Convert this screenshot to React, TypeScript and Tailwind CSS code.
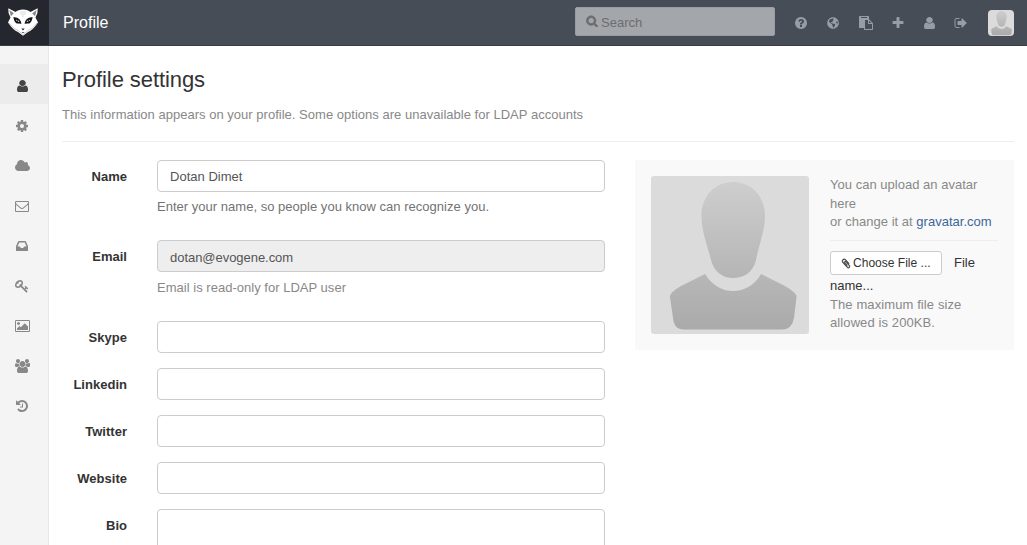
import type { ReactNode } from "react";
import { FaGlobeAmericas } from "react-icons/fa";

const PATHS = {
  user: "M1536 1399q0 109-62.5 187t-150.5 78h-854q-88 0-150.5-78t-62.5-187q0-85 8.5-160.5t31.5-152 58.5-131 94-89 134.5-34.5q131 128 313 128t313-128q76 0 134.5 34.5t94 89 58.5 131 31.5 152 8.5 160.5zm-256-887q0 159-112.5 271.5t-271.5 112.5-271.5-112.5-112.5-271.5 112.5-271.5 271.5-112.5 271.5 112.5 112.5 271.5z",
  cog: "M1152 896q0-106-75-181t-181-75-181 75-75 181 75 181 181 75 181-75 75-181zm512-109v222q0 12-8 23t-20 13l-185 28q-19 54-39 91 35 50 107 138 10 12 10 25t-9 23q-27 37-99 108t-94 71q-12 0-26-9l-138-108q-44 23-91 38-16 136-29 186-7 28-36 28h-222q-14 0-24.5-8.5t-11.5-21.5l-28-184q-49-16-90-37l-141 107q-10 9-25 9-14 0-25-11-126-114-165-168-7-10-7-23 0-12 8-23 15-21 51-66.5t54-70.5q-27-50-41-99l-183-27q-13-2-21-12.5t-8-23.5v-222q0-12 8-23t19-13l186-28q14-46 39-92-40-57-107-138-10-12-10-24 0-10 9-23 26-36 98.5-107.5t94.5-71.5q13 0 26 10l138 107q44-23 91-38 16-136 29-186 7-28 36-28h222q14 0 24.5 8.5t11.5 21.5l28 184q49 16 90 37l142-107q9-9 24-9 13 0 25 10 129 119 165 170 7 8 7 22 0 12-8 23-15 21-51 66.5t-54 70.5q26 50 41 98l183 28q13 2 21 12.5t8 23.5z",
  cloud: "M1984 1152q0 159-112.5 271.5t-271.5 112.5h-1088q-185 0-316.5-131.5t-131.5-316.5q0-132 71-241.5t187-163.5q-2-28-2-43 0-212 150-362t362-150q158 0 286.5 88t187.5 230q70-62 166-62 106 0 181 75t75 181q0 75-41 138 129 30 213 134.5t84 239.5z",
  mail: "M1664 1504v-768q-32 36-69 66-268 206-426 338-51 43-83 67t-86.5 48.5-102.5 24.5h-2q-48 0-102.5-24.5t-86.5-48.5-83-67q-158-132-426-338-37-30-69-66v768q0 13 9.5 22.5t22.5 9.5h1472q13 0 22.5-9.5t9.5-22.5zm0-1051v-24.5l-.5-13-3-12.5-5.5-9-9-7.5-14-2.5h-1472q-13 0-22.5 9.5t-9.5 22.5q0 168 147 284 193 152 401 317 6 5 35 29.5t46 37.5 44.5 31.5 50.5 27.5 43 9h2q20 0 43-9t50.5-27.5 44.5-31.5 46-37.5 35-29.5q208-165 401-317 54-43 100.5-115.5t46.5-131.5zm128-37v1088q0 66-47 113t-113 47h-1472q-66 0-113-47t-47-113v-1088q0-66 47-113t113-47h1472q66 0 113 47t47 113z",
  inbox: "M1151 960h316q-1-3-2.5-8t-2.5-8l-212-496h-708l-212 496q-1 2-2.5 8t-2.5 8h316l95 192h320zm513 30v482q0 26-19 45t-45 19h-1408q-26 0-45-19t-19-45v-482q0-62 25-123l238-552q10-25 36.5-42t52.5-17h832q26 0 52.5 17t36.5 42l238 552q25 61 25 123z",
  key: "M832 512q0-80-56-136t-136-56-136 56-56 136q0 42 19 83-41-19-83-19-80 0-136 56t-56 136 56 136 136 56 136-56 56-136q0-42-19-83 41 19 83 19 80 0 136-56t56-136zm851 704q0 17-49 66t-66 49q-9 0-28.5-16t-36.5-33-38.5-40-24.5-26l-96 96 220 220q28 28 28 68 0 42-39 81t-81 39q-40 0-68-28l-671-671q-176 131-365 131-163 0-265.5-102.5t-102.5-265.5q0-160 95-313t248-248 313-95q163 0 265.5 102.5t102.5 265.5q0 189-131 365l355 355 96-96q-3-3-26-24.5t-40-38.5-33-36.5-16-28.5q0-17 49-66t66-49q13 0 23 10 6 6 46 44.5t82 79.5 86.5 86 73 78 28.5 41z",
  picture: "M704 576q0 80-56 136t-136 56-136-56-56-136 56-136 136-56 136 56 56 136zm1024 384v448h-1408v-192l320-320 160 160 512-512zm96-704h-1600q-13 0-22.5 9.5t-9.5 22.5v1216q0 13 9.5 22.5t22.5 9.5h1600q13 0 22.5-9.5t9.5-22.5v-1216q0-13-9.5-22.5t-22.5-9.5zm160 32v1216q0 66-47 113t-113 47h-1600q-66 0-113-47t-47-113v-1216q0-66 47-113t113-47h1600q66 0 113 47t47 113z",
  group: "M593 896q-162 5-265 128h-134q-82 0-138-40.5t-56-118.5q0-353 124-353 6 0 43.5 21t97.5 42.5 119 21.5q67 0 133-23-5 37-5 66 0 159 93 293zm1071 637q0 120-73 189.5t-194 69.5h-874q-121 0-194-69.5t-73-189.5q0-53 3.5-103.5t14-109 26.5-108.5 43-97.5 62-81 85.5-53.5 111.5-20q10 0 43 21.5t73 48 107 48 135 21.5 135-21.5 107-48 73-48 43-21.5q61 0 111.5 20t85.5 53.5 62 81 43 97.5 26.5 108.5 14 109 3.5 103.5zm-1024-1277q0 106-75 181t-181 75-181-75-75-181 75-181 181-75 181 75 75 181zm704 384q0 159-112.5 271.5t-271.5 112.5-271.5-112.5-112.5-271.5 112.5-271.5 271.5-112.5 271.5 112.5 112.5 271.5zm576 225q0 78-56 118.5t-138 40.5h-134q-103-123-265-128 93-134 93-293 0-29-5-66 66 23 133 23 59 0 119-21.5t97.5-42.5 43.5-21q124 0 124 353zm-128-609q0 106-75 181t-181 75-181-75-75-181 75-181 181-75 181 75 75 181z",
  history: "M1664 896q0 156-61 298t-164 245-245 164-298 61q-172 0-327-72.5t-264-204.5q-7-10-6.5-22.5t8.5-20.5l137-138q10-9 25-9 16 2 23 12 73 95 179 147t225 52q104 0 198.5-40.5t163.5-109.5 109.5-163.5 40.5-198.5-40.5-198.5-109.5-163.5-163.5-109.5-198.5-40.5q-98 0-188 35.5t-160 101.5l137 138q31 30 14 69-17 40-59 40h-448q-26 0-45-19t-19-45v-448q0-42 40-59 39-17 69 14l130 129q107-101 244.5-156.5t284.5-55.5q156 0 298 61t245 164 164 245 61 298zm-640-288v448q0 14-9 23t-23 9h-320q-14 0-23-9t-9-23v-64q0-14 9-23t23-9h224v-352q0-14 9-23t23-9h64q14 0 23 9t9 23z",
  question: "M1024 1376v-192q0-14-9-23t-23-9h-192q-14 0-23 9t-9 23v192q0 14 9 23t23 9h192q14 0 23-9t9-23zm256-672q0-88-55.5-163t-138.5-116-170-41q-243 0-371 213-15 24 8 42l132 100q7 6 19 6 16 0 25-12 53-68 86-92 34-24 86-24 48 0 85.5 26t37.5 59q0 38-20 61t-68 45q-63 28-115.5 86.5t-52.5 125.5v36q0 14 9 23t23 9h192q14 0 23-9t9-23q0-19 21.5-49.5t54.5-49.5q32-18 49-28.5t46-35 44.5-48 28-60.5 12.5-81zm384 192q0 209-103 385.5t-279.5 279.5-385.5 103-385.5-103-279.5-279.5-103-385.5 103-385.5 279.5-279.5 385.5-103 385.5 103 279.5 279.5 103 385.5z",
  paste: "M768 1664h896v-640h-416q-40 0-68-28t-28-68v-416h-384v1152zm256-1440v-64q0-13-9.5-22.5t-22.5-9.5h-704q-13 0-22.5 9.5t-9.5 22.5v64q0 13 9.5 22.5t22.5 9.5h704q13 0 22.5-9.5t9.5-22.5zm256 672h299l-299-299v299zm512 128v672q0 40-28 68t-68 28h-960q-40 0-68-28t-28-68v-160h-544q-40 0-68-28t-28-68v-1344q0-40 28-68t68-28h1088q40 0 68 28t28 68v328q21 13 36 28l408 408q28 28 48 76t20 88z",
  plus: "M1600 736v192q0 40-28 68t-68 28h-416v416q0 40-28 68t-68 28h-192q-40 0-68-28t-28-68v-416h-416q-40 0-68-28t-28-68v-192q0-40 28-68t68-28h416v-416q0-40 28-68t68-28h192q40 0 68 28t28 68v416h416q40 0 68 28t28 68z",
  signOut: "M704 1440q0 4 1 20t.5 26.5-3 23.5-10 19.5-20.5 6.5h-320q-119 0-203.5-84.5t-84.5-203.5v-704q0-119 84.5-203.5t203.5-84.5h320q13 0 22.5 9.5t9.5 22.5q0 4 1 20t.5 26.5-3 23.5-10 19.5-20.5 6.5h-320q-66 0-113 47t-47 113v704q0 66 47 113t113 47h312l11.5 1 11.5 3 8 5.5 7 9 2 13.5zm928-544q0 26-19 45l-544 544q-19 19-45 19t-45-19-19-45v-288h-448q-26 0-45-19t-19-45v-384q0-26 19-45t45-19h448v-288q0-26 19-45t45-19 45 19l544 544q19 19 19 45z",
  search: "M1216 832q0-185-131.5-316.5t-316.5-131.5-316.5 131.5-131.5 316.5 131.5 316.5 316.5 131.5 316.5-131.5 131.5-316.5zm512 832q0 52-38 90t-90 38q-54 0-90-38l-343-342q-179 124-399 124-143 0-273.5-55.5t-225-150-150-225-55.5-273.5 55.5-273.5 150-225 225-150 273.5-55.5 273.5 55.5 225 150 150 225 55.5 273.5q0 220-124 399l343 343q37 37 37 90z",
  clip: "M1596 1385q0 117-79 196t-196 79q-135 0-235-100l-777-776q-113-115-113-271 0-159 110-270t269-111q158 0 273 113l605 606q10 10 10 22 0 16-30.5 46.5t-46.5 30.5q-13 0-23-10l-606-607q-79-77-181-77-106 0-179 75t-73 181q0 105 76 181l776 777q63 63 145 63 64 0 106-42t42-106q0-82-63-145l-581-581q-26-24-60-24-29 0-48 19t-19 48q0 32 25 59l410 410q10 10 10 22 0 16-31 47t-47 31q-12 0-22-10l-410-410q-63-61-63-149 0-82 57-139t139-57q88 0 149 63l581 581q100 98 100 235z",
};

type IconName = keyof typeof PATHS;

const VIEW_BOX: Partial<Record<IconName, string>> = {
  user: "256 128 1280 1536",
  cloud: "64 0 1920 1792",
  picture: "64 0 1920 1792",
  group: "0 0 1920 1792",
};

function Icon({ name, className = "h-3.5 w-3.5" }: { name: IconName; className?: string }) {
  return (
    <svg viewBox={VIEW_BOX[name] ?? "0 0 1792 1792"} preserveAspectRatio="none" className={`shrink-0 fill-current stroke-current ${className}`}>
      <path d={PATHS[name]} />
    </svg>
  );
}

function Logo() {
  return (
    <svg viewBox="0 0 32 30" className="h-[30px] w-8">
      <path d="M1.300 1.300 L8.500 5 Q11 2.500 16 2.500 Q21 2.500 23.500 5 L30.700 1.300 Q31.300 6 28.500 10.500 L31 15.500 Q26 23 21 25 L16 28.800 L11 25 Q6 23 1 15.500 L3.500 10.500 Q.7 6 1.300 1.300Z" fill="#fff" />
      <path d="M2.300 3 L6.800 6.300 L3.900 9.300Z M29.700 3 L25.200 6.300 L28.100 9.300Z" fill="#85878b" />
      <path d="M1.800 15.800 Q6 21.500 11 23.500 L16 27.500 L21 23.500 Q26 21.500 30.200 15.800" fill="none" stroke="#b9babd" strokeWidth=".7" />
      <path d="M6.300 10.300 Q10 9.800 12.400 12.200 Q14.200 14 14.500 16.800 Q12 16.300 9.800 16.600 Q7.500 15.500 6.300 10.300Z M25.700 10.300 Q22 9.800 19.600 12.200 Q17.800 14 17.500 16.800 Q20 16.300 22.200 16.600 Q24.500 15.500 25.700 10.300Z" fill="#111316" />
      <path d="M8.800 12.900 Q11.300 12.500 12.500 15 Q10.300 15.300 8.800 12.900Z M23.200 12.900 Q20.700 12.500 19.500 15 Q21.700 15.300 23.200 12.900Z" fill="#e8e8e9" />
      <path d="M10.600 13v1.800 M21.400 13v1.800" stroke="#111316" strokeWidth=".9" />
      <path d="M14.300 21.500h3.400l-1.700 2z M14.500 24.900h3l-1.500 1z" fill="#24272d" />
      <path d="M16 4v6 M14 4v4 M18 4v4" stroke="#c4c5c8" strokeWidth=".6" />
    </svg>
  );
}

function Avatar({ id, className }: { id: string; className: string }) {
  return (
    <svg viewBox="0 0 158 158" className={className}>
      <defs>
        <linearGradient id={`${id}-head`} x1="0" y1="0" x2="0" y2="1">
          <stop offset="0" stopColor="#cecece" />
          <stop offset="1" stopColor="#b5b5b5" />
        </linearGradient>
        <linearGradient id={`${id}-body`} x1="0" y1="0" x2="0" y2="1">
          <stop offset="0" stopColor="#b7b7b7" />
          <stop offset="1" stopColor="#aaaaaa" />
        </linearGradient>
      </defs>
      <rect width="158" height="158" fill="#dbdbdb" />
      <path d="M82 6C100 6 114 20 114 40C114 55 108 68 105 84C102 97 92 102 82 102C72 102 63 96 60 84C56 68 50.500 55 50.500 40C50.500 20 64 6 82 6Z" fill={`url(#${id}-head)`} />
      <path d="M54 98C61 109 71 115 82 115C93 115 104 109 110 98L134 110Q146 117 145.500 121L143 142Q141 153.500 131 153.500H33Q23 153.500 22 142L19 121Q18 117 30 110Z" fill={`url(#${id}-body)`} />
    </svg>
  );
}

const SIDEBAR: IconName[] = ["user", "cog", "cloud", "mail", "inbox", "key", "picture", "group", "history"];

const SIDEBAR_SIZE: Partial<Record<IconName, string>> = {
  user: "h-3 w-[11px]",
  cloud: "h-3.5 w-[15px]",
  picture: "h-3.5 w-[15px]",
  group: "h-3.5 w-[15px]",
};

function Field({ label, value, readOnly, help, tall }: { label: string; value?: string; readOnly?: boolean; help?: ReactNode; tall?: boolean }) {
  return (
    <div className="flex">
      <label className="w-[65px] shrink-0 pt-2 text-right font-bold leading-[18px] text-[#333]">{label}</label>
      <div className="ml-[30px] w-[448px]">
        <div
          className={`flex rounded-[4px] border border-[#ccc] px-3 leading-[18px] text-[#555] ${tall ? "h-[90px]" : "h-8"} ${readOnly ? "bg-[#eee] pt-2 tracking-[-0.04px]" : "bg-white pt-[7px]"}`}
        >
          {value}
        </div>
        {help && <p className="mt-[6px] leading-[18px]">{help}</p>}
      </div>
    </div>
  );
}

export default function App() {
  return (
    <div className="flex h-[545px] w-[1027px] flex-col overflow-hidden bg-white font-['Liberation_Sans',Arial,sans-serif] text-[13px] tracking-[0.02px] text-[#333]">
      <header className="flex h-[46px] shrink-0 items-stretch border-b border-[#373d47] bg-[#474d57]">
        <div className="flex w-[49px] justify-center bg-[#24272d] pr-[3px] pt-[7px]">
          <Logo />
        </div>
        <h1 className="ml-[14px] mt-3 text-[16px] leading-[22px] text-white">Profile</h1>
        <div className="ml-auto mt-[7px] flex h-[29px] w-[200px] rounded-[2px] border border-[#979ca5] bg-[#a3a6aa] pl-[10px] text-[#6b6d70]">
          <Icon name="search" className="mt-[7px] h-3 w-3 stroke-[110]" />
          <span className="ml-[3px] mt-[6px] leading-[18px]">Search</span>
        </div>
        <nav className="ml-[19px] flex items-center text-[#979ca5]">
          <Icon name="question" />
          <FaGlobeAmericas className="ml-[19px] h-3 w-3" />
          <Icon name="paste" className="ml-5 h-3.5 w-3.5" />
          <Icon name="plus" className="ml-[18px] h-3.5 w-3.5" />
          <Icon name="user" className="ml-[19px] h-3 w-[11px]" />
          <Icon name="signOut" className="ml-[19px] h-3.5 w-3.5" />
        </nav>
        <Avatar id="small" className="ml-5 mr-[13px] mt-[10px] h-[26px] w-[26px] rounded-[4px]" />
      </header>
      <div className="flex min-h-0 flex-1">
        <aside className="w-[49px] shrink-0 border-r border-[#e7e7e7] bg-[#f4f4f4] pt-[18px]">
          {SIDEBAR.map((name, i) => (
            <div key={name} className={`flex h-10 items-center justify-center pt-[3px] ${name === "user" || SIDEBAR_SIZE[name] ? "pr-[3px]" : "pr-1"} ${i === 0 ? "bg-[#ececec] text-[#444]" : "text-[#888]"}`}>
              <Icon name={name} className={SIDEBAR_SIZE[name] ?? "h-3.5 w-3.5"} />
            </div>
          ))}
        </aside>
        <main className="flex-1 pl-[13px] pr-[13px]">
          <h2 className="mt-[21px] text-[22px] leading-[26px] tracking-[-0.08px]">Profile settings</h2>
          <p className="mt-[13px] leading-[18px] text-[#888]">This information appears on your profile. Some options are unavailable for LDAP accounts</p>
          <hr className="mb-[18px] mt-[17px] border-t border-[#eee]" />
          <div className="flex items-start">
            <div className="flex w-[543px] shrink-0 flex-col">
              <Field label="Name" value="Dotan Dimet" help={<span className="text-[#737373]">Enter your name, so people you know can recognize you.</span>} />
              <div className="h-6" />
              <Field label="Email" value="dotan@evogene.com" readOnly help={<span className="relative top-px text-[#888]">Email is read-only for LDAP user</span>} />
              <div className="mt-[25px] flex flex-col gap-[15px]">
                <Field label="Skype" />
                <Field label="Linkedin" />
                <Field label="Twitter" />
                <Field label="Website" />
                <Field label="Bio" tall />
              </div>
            </div>
            <section className="ml-[30px] flex h-[190px] w-[379px] bg-[#f9f9f9] p-4">
              <Avatar id="large" className="h-[158px] w-[158px] shrink-0 rounded-[3px]" />
              <div className="ml-[21px] w-[169px] leading-[18.5px] text-[#888]">
                <p>
                  You can upload an avatar
                  <br />
                  here
                  <br />
                  or change it at <a className="text-[#3c669a]">gravatar.com</a>
                </p>
                <hr className="mb-[10px] mt-[8.500px] border-t border-[#eee]" />
                <div className="flex text-[#333]">
                  <button className="flex h-6 w-28 items-center whitespace-nowrap rounded-[3px] border border-[#ccc] bg-white pl-[10px] pt-px text-[12px]">
                    <Icon name="clip" className="mr-[2px] h-[11px] w-[10px] stroke-[70]" />
                    Choose File ...
                  </button>
                  <span className="ml-3 mt-[3px]">File</span>
                </div>
                <p className="mt-[2px] text-[#333]">name...</p>
                <p className="tracking-[0.1px]">The maximum file size allowed is 200KB.</p>
              </div>
            </section>
          </div>
        </main>
      </div>
    </div>
  );
}
